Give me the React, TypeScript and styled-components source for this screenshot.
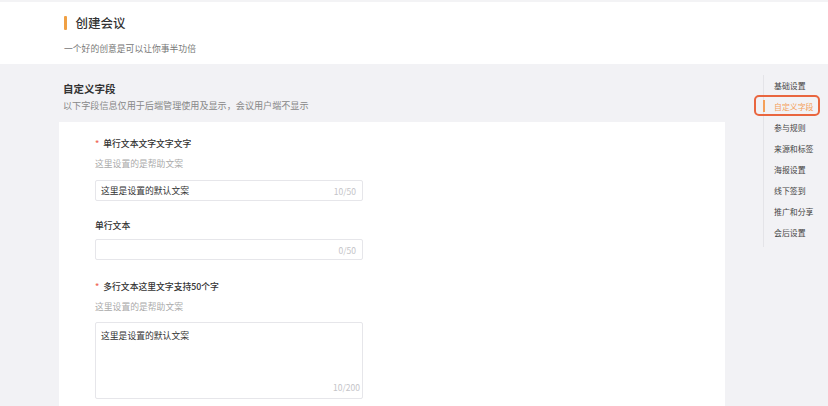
import React from "react";
import styled, { createGlobalStyle } from "styled-components";

const Global = createGlobalStyle`
  html, body { margin: 0; padding: 0; }
  body {
    width: 828px; height: 406px; overflow: hidden;
    background: #f2f2f5;
    font-family: "Noto Sans CJK SC", "Noto Sans", sans-serif;
    color: #333;
  }
`;

const Header = styled.header`
  background: #fff;
  border-top: 2px solid #f3f3f5;
  height: 64px;
  box-sizing: border-box;
  padding: 13px 0 0 64px;
`;

const TitleRow = styled.div`
  display: flex;
  align-items: center;
  gap: 9px;
  height: 15px;
`;

const TitleBar = styled.span`
  width: 2.5px;
  height: 14px;
  background: #f0a044;
  border-radius: 1px;
`;

const Title = styled.h1`
  margin: 0;
  font-size: 12.5px;
  font-weight: 500;
  color: #333;
  line-height: 15px;
`;

const Subtitle = styled.p`
  margin: 13px 0 0;
  font-size: 8.8px;
  color: #777;
  line-height: 12px;
`;

const Main = styled.div`
  display: flex;
  align-items: flex-start;
  padding-left: 59px;
  gap: 38px;
`;

const Content = styled.div`
  width: 666px;
  padding-top: 18px;
`;

const SectionTitle = styled.h2`
  margin: 0 0 0 4px;
  font-size: 10.5px;
  font-weight: 700;
  color: #333;
  line-height: 14px;
`;

const SectionDesc = styled.p`
  margin: 2px 0 0 4px;
  font-size: 9.1px;
  color: #888;
  line-height: 14px;
`;

const Card = styled.div`
  margin-top: 10px;
  background: #fff;
  height: 300px;
  padding: 15px 0 0 36px;
  box-sizing: border-box;
`;

const Field = styled.div<{ $gap?: number }>`
  display: flex;
  flex-direction: column;
  margin-bottom: ${(p) => p.$gap ?? 18}px;
`;

const Label = styled.div`
  font-size: 8.8px;
  font-weight: 500;
  color: #333;
  line-height: 14px;
`;

const Star = styled.span`
  color: #f06a5c;
  margin-right: 4px;
`;

const Help = styled.div`
  margin-top: 7px;
  font-size: 8.8px;
  color: #aaa;
  line-height: 12px;
`;

const InputBox = styled.div<{ $multi?: boolean; $top?: number }>`
  margin-top: ${(p) => p.$top ?? 10}px;
  width: 268px;
  height: ${(p) => (p.$multi ? 77 : 21)}px;
  box-sizing: border-box;
  border: 1px solid #e6e6ea;
  border-radius: 2px;
  display: flex;
  justify-content: space-between;
  align-items: ${(p) => (p.$multi ? "stretch" : "center")};
  flex-direction: ${(p) => (p.$multi ? "column" : "row")};
  padding: ${(p) => (p.$multi ? "7px 2px 5px 5px" : "0 6px 0 5px")};
`;

const Value = styled.span`
  font-size: 8.8px;
  color: #333;
  line-height: 12px;
`;

const Count = styled.span`
  font-size: 8.5px;
  color: #c4c4c8;
  line-height: 12px;
  align-self: flex-end;
`;

const LineCount = styled(Count)`
  align-self: center;
`;

const Nav = styled.nav`
  margin-top: 11px;
  width: 56px;
  height: 172px;
  border-left: 1px solid #e4e4e8;
  display: flex;
  flex-direction: column;
`;

const NavItem = styled.div<{ $active?: boolean }>`
  position: relative;
  height: 21px;
  display: flex;
  align-items: center;
  padding-left: 10px;
  font-size: 7.9px;
  color: ${(p) => (p.$active ? "#f4a05a" : "#444")};
  ${(p) =>
    p.$active &&
    `
    &::before {
      content: "";
      position: absolute;
      left: -1px; top: 4px;
      width: 1.5px; height: 12px;
      background: #f4a05a;
    }
    &::after {
      content: "";
      position: absolute;
      left: -10px; right: 0; top: -1px; bottom: 1px;
      border: 2px solid #e9663f;
      border-radius: 5px;
    }
  `}
`;

const navItems = ["基础设置", "自定义字段", "参与规则", "来源和标签", "海报设置", "线下签到", "推广和分享", "会后设置"];

export default function App() {
  return (
    <>
      <Global />
      <Header>
        <TitleRow>
          <TitleBar />
          <Title>创建会议</Title>
        </TitleRow>
        <Subtitle>一个好的创意是可以让你事半功倍</Subtitle>
      </Header>
      <Main>
        <Content>
          <SectionTitle>自定义字段</SectionTitle>
          <SectionDesc>以下字段信息仅用于后端管理使用及显示，会议用户端不显示</SectionDesc>
          <Card>
            <Field $gap={18}>
              <Label><Star>*</Star>单行文本文字文字文字</Label>
              <Help>这里设置的是帮助文案</Help>
              <InputBox>
                <Value>这里是设置的默认文案</Value>
                <LineCount>10/50</LineCount>
              </InputBox>
            </Field>
            <Field $gap={20}>
              <Label>单行文本</Label>
              <InputBox $top={6}>
                <Value />
                <LineCount>0/50</LineCount>
              </InputBox>
            </Field>
            <Field>
              <Label><Star>*</Star>多行文本这里文字支持50个字</Label>
              <Help>这里设置的是帮助文案</Help>
              <InputBox $multi $top={9}>
                <Value>这里是设置的默认文案</Value>
                <Count>10/200</Count>
              </InputBox>
            </Field>
          </Card>
        </Content>
        <Nav>
          {navItems.map((n) => (
            <NavItem key={n} $active={n === "自定义字段"}>{n}</NavItem>
          ))}
        </Nav>
      </Main>
    </>
  );
}
